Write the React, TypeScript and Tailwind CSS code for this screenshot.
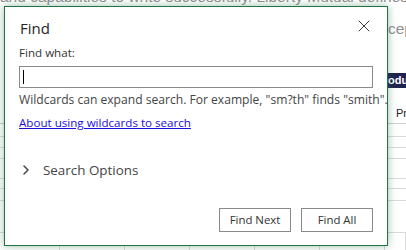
import { ChevronRight, X } from "lucide-react";

const ui = { fontFamily: '"Open Sans", "Noto Sans", sans-serif' };
const page = { fontFamily: '"Liberation Sans", Arial, sans-serif' };

// heights of the sheet rows below the header, each including its bottom rule
const rows = [13, 11, 11, 20, 10, 12, 32];
const cols = [60, 65, 65, 65, 65, 65, 21];

export default function App() {
  return (
    <div className="relative h-[250px] w-[406px] overflow-hidden bg-white">
      {/* document + sheet behind the dialog */}
      <div className="flex flex-col" style={page}>
        <div className="h-[73px]">
          <p className="mt-[-16px] whitespace-nowrap text-[15.5px] leading-[26px] text-[#8f8f8f]">
            and capabilities to write successfully. Liberty Mutual defines
          </p>
          <p className="whitespace-nowrap pl-[388px] pt-[5px] text-[15.5px] leading-[28px] text-[#8f8f8f]">cep</p>
        </div>
        <div className="flex h-[15px] justify-end">
          <div className="flex w-[18px] items-center overflow-hidden bg-[#1f2350] text-[11px] font-bold text-white">
            odu
          </div>
        </div>
        <div className="h-[36px] border-b border-[#cfcfcf] pl-[396px] pt-[19px] text-[11px] leading-[13px] text-[#222]">Pr</div>
        {rows.map((h, i) => (
          <div key={i} className="border-b border-[#dadada]" style={{ height: h }} />
        ))}
        <div className="flex h-[20px]">
          {cols.map((w, i) => (
            <div key={i} className="h-full border-r border-[#dadada]" style={{ width: w }} />
          ))}
        </div>
      </div>

      {/* Find dialog */}
      <div
        className="absolute left-[4px] top-[6px] h-[240px] w-[384px] border border-[#217346] bg-white shadow-[0_0_8px_rgba(33,115,70,0.45)]"
        style={ui}
      >
        <div className="flex items-center justify-between pl-[15px] pr-[13px] pt-[10px]">
          <span className="text-[15px] leading-[22px] text-[#262626]">Find</span>
          <X className="mt-[-4px] h-[20px] w-[20px] text-[#3a3a3a]" strokeWidth={1.2} />
        </div>
        <div className="flex flex-col px-[14px]">
          <div className="mt-[6px] text-[11.6px] leading-[16px] text-[#333]">Find what:</div>
          <div className="mt-[5px] flex h-[22px] w-full items-center border border-[#8a8a8a] pl-[3px]">
            <div className="h-[14px] w-px bg-black" />
          </div>
          <div className="mt-[4px] whitespace-nowrap text-[12.1px] leading-[16px] text-[#444]">
            Wildcards can expand search. For example, "sm?th" finds "smith".
          </div>
          <div className="mt-[7px] text-[11.6px] leading-[16px] text-[#1a0dde] underline">
            About using wildcards to search
          </div>
          <div className="mt-[29px] flex items-center gap-[9px]">
            <ChevronRight className="ml-[-1px] h-[16px] w-[16px] text-[#444]" strokeWidth={2.2} />
            <span className="text-[13.4px] leading-[20px] text-[#444]">Search Options</span>
          </div>
          <div className="mt-[28px] flex justify-end gap-[10px]">
            <button className="h-[24px] w-[72px] border border-[#8a8a8a] bg-white text-[11.4px] text-[#333]">
              Find Next
            </button>
            <button className="h-[24px] w-[72px] border border-[#8a8a8a] bg-white text-[11.4px] text-[#333]">
              Find All
            </button>
          </div>
        </div>
      </div>
    </div>
  );
}
